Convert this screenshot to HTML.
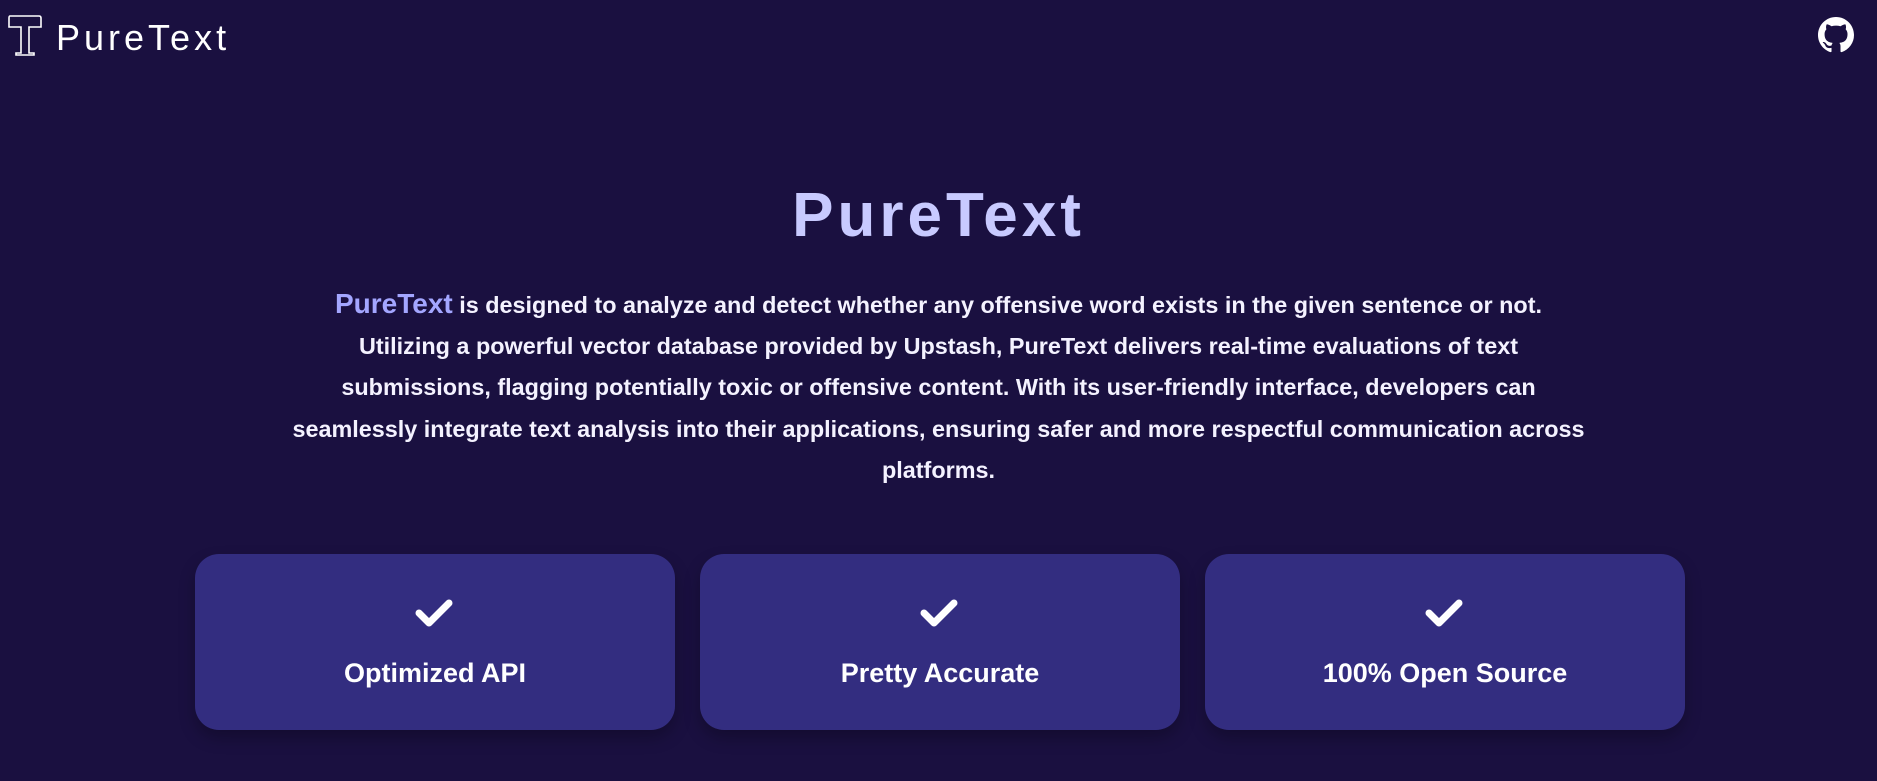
<!DOCTYPE html>
<html><head><meta charset="utf-8"><style>
*{margin:0;padding:0;box-sizing:border-box}
body{width:1877px;height:781px;background:#1a1040;font-family:"Liberation Sans",sans-serif;color:#fff;position:relative;overflow:hidden}
.logo{position:absolute;left:0;top:10px;display:flex;align-items:center}
.logo span{font-size:36px;letter-spacing:4px;margin-left:6px;font-weight:500;line-height:1}
.gh{position:absolute;left:1818px;top:17px}
h1{position:absolute;top:180px;width:100%;text-align:center;font-size:62px;font-weight:700;letter-spacing:4px;color:#c8caff}
p{position:absolute;top:283px;left:0;width:1877px;text-align:center;font-size:23.4px;font-weight:700;line-height:41.2px;color:#f4f2ff;white-space:nowrap}
p b{color:#a3a6ff;font-size:28px}
.card{position:absolute;top:554px;width:480px;height:176px;background:#332d80;border-radius:24px;box-shadow:0 8px 16px rgba(0,0,0,.25);text-align:center}
.card svg{position:absolute;left:219px;top:44px}
.card div{position:absolute;top:104px;width:100%;font-size:27px;font-weight:700}
</style></head><body>
<div class="logo"><svg width="50" height="56" viewBox="0 0 50 56" fill="none" stroke="#fff" stroke-width="1.6"><path d="M10 6H39Q41 6 41 8V17H29V43H34V45H16V43H21V17H9V8Q9 6 10 6Z"/></svg><span>PureText</span></div>
<svg class="gh" width="36" height="36" viewBox="0 0 16 16" fill="#fff"><path d="M8 0C3.58 0 0 3.58 0 8c0 3.540 2.29 6.530 5.470 7.590.4.07.55-.17.55-.38 0-.19-.01-.82-.01-1.49-2.01.37-2.530-.49-2.690-.94-.09-.23-.48-.94-.82-1.13-.28-.15-.68-.52-.01-.53.63-.01 1.08.58 1.23.82.72 1.21 1.87.87 2.33.66.07-.52.28-.87.51-1.07-1.78-.2-3.64-.89-3.64-3.950 0-.87.31-1.59.82-2.15-.08-.2-.36-1.02.08-2.12 0 0 .67-.21 2.2.82.64-.18 1.32-.27 2-.27.68 0 1.36.09 2 .27 1.53-1.04 2.2-.82 2.2-.82.44 1.1.16 1.92.08 2.12.51.56.82 1.27.82 2.15 0 3.07-1.87 3.75-3.65 3.95.29.25.54.73.54 1.48 0 1.07-.01 1.93-.01 2.2 0 .21.15.46.55.38A8.013 8.013 0 0016 8c0-4.42-3.58-8-8-8z"/></svg>
<h1>PureText</h1>
<p><b>PureText</b> is designed to analyze and detect whether any offensive word exists in the given sentence or not.<br>Utilizing a powerful vector database provided by Upstash, PureText delivers real-time evaluations of text<br>submissions, flagging potentially toxic or offensive content. With its user-friendly interface, developers can<br>seamlessly integrate text analysis into their applications, ensuring safer and more respectful communication across<br>platforms.</p>
<div class="card" style="left:195px"><svg width="40" height="32" viewBox="0 0 40 32"><path d="M5 15L15 25L35 5" fill="none" stroke="#fff" stroke-width="7" stroke-linecap="round" stroke-linejoin="round"/></svg><div>Optimized API</div></div>
<div class="card" style="left:700px"><svg width="40" height="32" viewBox="0 0 40 32"><path d="M5 15L15 25L35 5" fill="none" stroke="#fff" stroke-width="7" stroke-linecap="round" stroke-linejoin="round"/></svg><div>Pretty Accurate</div></div>
<div class="card" style="left:1205px"><svg width="40" height="32" viewBox="0 0 40 32"><path d="M5 15L15 25L35 5" fill="none" stroke="#fff" stroke-width="7" stroke-linecap="round" stroke-linejoin="round"/></svg><div>100% Open Source</div></div>
</body></html>
